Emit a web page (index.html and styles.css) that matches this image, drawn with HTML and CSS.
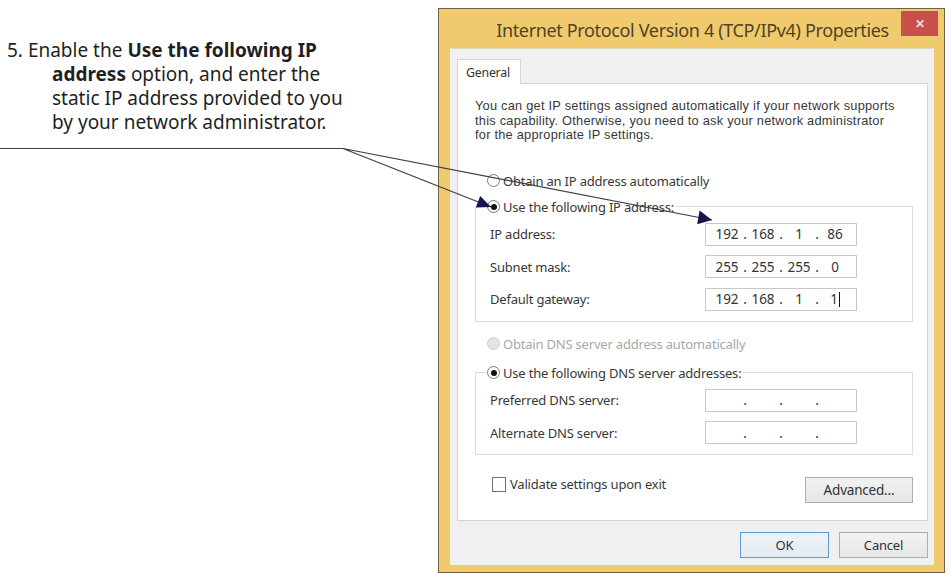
FILE: index.html
```html
<!DOCTYPE html>
<html lang="en">
<head>
<meta charset="utf-8">
<title>Internet Protocol Version 4 (TCP/IPv4) Properties</title>
<link rel="stylesheet" href="styles.css">
</head>
<body>
<div class="page">
  <div class="step">
    <p class="step-text">5. Enable the <b>Use the following IP</b><br><b>address</b> option, and enter the<br>static IP address provided to you<br>by your network administrator.</p>
  </div>

  <div class="window">
    <div class="titlebar">
      <span class="title">Internet Protocol Version 4 (TCP/IPv4) Properties</span>
      <span class="close">&#x2715;</span>
    </div>
    <div class="client">
      <div class="tabs"><span class="tab">General</span></div>
      <div class="panel">
        <p class="desc">You can get IP settings assigned automatically if your network supports<br>this capability. Otherwise, you need to ask your network administrator<br>for the appropriate IP settings.</p>

        <div class="radio-row first"><span class="radio"></span><span>Obtain an IP address automatically</span></div>
        <fieldset class="group ip-group">
          <legend class="radio-row"><span class="radio checked"></span><span>Use the following IP address:</span></legend>
          <div class="field-row"><span class="label">IP address:</span>
            <span class="ipbox"><span class="seg">192</span><span class="dot">.</span><span class="seg">168</span><span class="dot">.</span><span class="seg">1</span><span class="dot">.</span><span class="seg">86</span></span></div>
          <div class="field-row"><span class="label">Subnet mask:</span>
            <span class="ipbox"><span class="seg">255</span><span class="dot">.</span><span class="seg">255</span><span class="dot">.</span><span class="seg">255</span><span class="dot">.</span><span class="seg">0</span></span></div>
          <div class="field-row"><span class="label">Default gateway:</span>
            <span class="ipbox"><span class="seg">192</span><span class="dot">.</span><span class="seg">168</span><span class="dot">.</span><span class="seg">1</span><span class="dot">.</span><span class="seg">1<span class="caret"></span></span></span></div>
        </fieldset>

        <div class="radio-row dns disabled"><span class="radio"></span><span>Obtain DNS server address automatically</span></div>
        <fieldset class="group dns-group">
          <legend class="radio-row"><span class="radio checked"></span><span>Use the following DNS server addresses:</span></legend>
          <div class="field-row"><span class="label">Preferred DNS server:</span>
            <span class="ipbox"><span class="seg"></span><span class="dot">.</span><span class="seg"></span><span class="dot">.</span><span class="seg"></span><span class="dot">.</span><span class="seg"></span></span></div>
          <div class="field-row"><span class="label">Alternate DNS server:</span>
            <span class="ipbox"><span class="seg"></span><span class="dot">.</span><span class="seg"></span><span class="dot">.</span><span class="seg"></span><span class="dot">.</span><span class="seg"></span></span></div>
        </fieldset>

        <div class="bottom-row">
          <span class="check-row"><span class="checkbox"></span><span>Validate settings upon exit</span></span>
          <span class="btn advanced">Advanced...</span>
        </div>
      </div>
      <div class="footer">
        <span class="btn ok">OK</span>
        <span class="btn">Cancel</span>
      </div>
    </div>
  </div>
</div>

<svg class="callout" width="951" height="576" viewBox="0 0 951 576">
  <path d="M0 148.5 H343 L712 220 M343 148.5 L491 207" fill="none" stroke="#3d3d48" stroke-width="1.2"/>
  <polygon points="491,207 475.8,207.6 480.2,196" fill="#15154f"/>
  <polygon points="712,220 697.2,224.2 699.6,210.6" fill="#15154f"/>
</svg>
</body>
</html>
```

FILE: styles.css
```css
* { box-sizing: border-box; }

html, body {
  margin: 0;
  padding: 0;
  background: #ffffff;
}

body {
  width: 951px;
  height: 576px;
  overflow: hidden;
  position: relative;
  font-family: "Noto Sans", "Open Sans", sans-serif;
}

.page {
  display: flex;
  padding-top: 8px;
}

/* ---------- instruction text ---------- */
.step {
  width: 438px;
  flex: none;
}

.step-text {
  margin: 30px 0 0 0;
  padding-left: 52px;
  text-indent: -45px;
  font-family: "Noto Sans", sans-serif;
  font-size: 19px;
  line-height: 24px;
  color: #1f1f1f;
}

.step-text b { font-weight: 700; }

/* ---------- window ---------- */
.window {
  width: 507px;
  height: 565px;
  flex: none;
  position: relative;
  border: 1px solid #6f6246;
  background: #f1ca6e;
  display: flex;
  flex-direction: column;
}

.titlebar {
  height: 39px;
  flex: none;
  display: flex;
  align-items: center;
  justify-content: center;
  padding-top: 3px;
}

.title {
  font-family: "Noto Sans", sans-serif;
  font-size: 18px;
  letter-spacing: -0.35px;
  color: #4e4428;
  margin-left: 2px;
}

.close {
  position: absolute;
  top: 2px;
  right: 6px;
  width: 37px;
  height: 25px;
  background: #c94f4a;
  color: #f4dede;
  font-size: 12px;
  font-weight: 700;
  display: flex;
  align-items: center;
  justify-content: center;
}

.client {
  flex: 1;
  margin: 0 10px 7px 11px;
  background: #f0f0f0;
  padding: 10px 6px 0 7px;
  display: flex;
  flex-direction: column;
  border-top: 1px solid #e6d9b8;
}

.tabs {
  display: flex;
  height: 25px;
  margin-bottom: -1px;
  position: relative;
  z-index: 1;
}

.tab {
  width: 64px;
  height: 25px;
  background: #ffffff;
  border: 1px solid #d4d4d4;
  border-bottom: none;
  font-size: 12.3px;
  letter-spacing: -0.2px;
  color: #333;
  padding: 4px 0 0 8px;
}

.panel {
  height: 438px;
  background: #ffffff;
  border: 1px solid #d4d4d4;
  padding: 15px 13px 0 17px;
  font-size: 13px;
  color: #383838;
}

.desc {
  margin: 0;
  font-family: "Liberation Sans", Arial, sans-serif;
  font-size: 12.8px;
  line-height: 14.5px;
  letter-spacing: 0.24px;
  color: #383838;
}

/* ---------- radios ---------- */
.radio-row {
  display: flex;
  align-items: center;
  height: 16px;
  gap: 3px;
  font-size: 13px;
  letter-spacing: -0.2px;
  color: #383838;
}

.radio-row.first {
  margin: 30px 0 0 12px;
}

.radio-row.dns {
  margin: 14px 0 0 12px;
}

.radio-row.disabled { color: #a8a8a8; }

.radio {
  width: 13px;
  height: 13px;
  border-radius: 50%;
  border: 1px solid #7c7c7c;
  background: #fff;
  flex: none;
  display: flex;
  align-items: center;
  justify-content: center;
}

.radio.checked::after {
  content: "";
  width: 6px;
  height: 6px;
  border-radius: 50%;
  background: #111;
}

.disabled .radio {
  border-color: #d0d0d0;
  background: #e4e4e4;
}

/* ---------- group boxes ---------- */
.group {
  width: 438px;
  border: 1px solid #dcdcdc;
  padding: 0 14px 10px 14px;
  margin: 0;
}

.ip-group { margin-top: 10px; }
.dns-group { margin-top: 13px; }

.group legend.radio-row {
  padding: 0 2px 0 0;
  margin-left: -3px;
}

.field-row {
  display: flex;
  align-items: center;
  height: 23px;
  margin-top: 9.5px;
}

.group .field-row:first-of-type { margin-top: 8px; }

.label {
  width: 215px;
  flex: none;
  letter-spacing: -0.2px;
}

.ipbox {
  width: 152px;
  height: 23px;
  border: 1px solid #c8c8c8;
  background: #fff;
  display: flex;
  align-items: center;
  padding-left: 6px;
  font-size: 13.5px;
  color: #333;
}

.seg {
  width: 30px;
  text-align: center;
  position: relative;
}

.dot {
  width: 6px;
  text-align: center;
}

.caret {
  display: inline-block;
  width: 1px;
  height: 15px;
  background: #111;
  vertical-align: middle;
  margin-left: 1px;
  position: relative;
  top: -1px;
}

/* ---------- bottom row ---------- */
.bottom-row {
  width: 438px;
  margin-top: 22px;
  display: flex;
  justify-content: space-between;
  align-items: flex-start;
}

.check-row {
  display: flex;
  align-items: center;
  gap: 4px;
  margin: -2px 0 0 17px;
  font-size: 13px;
  letter-spacing: -0.2px;
}

.checkbox {
  width: 14px;
  height: 15px;
  border: 1px solid #707070;
  background: #fff;
}

.btn {
  height: 26px;
  width: 89px;
  display: flex;
  align-items: center;
  justify-content: center;
  border: 1px solid #adadad;
  background: linear-gradient(#f2f2f2, #e6e6e6);
  font-size: 13px;
  letter-spacing: -0.2px;
  color: #333;
}

.btn.advanced {
  width: 108px;
  font-size: 13.5px;
}

.footer {
  display: flex;
  justify-content: flex-end;
  gap: 10px;
  margin-top: 11px;
}

.btn.ok {
  border-color: #5c9bd1;
  background: linear-gradient(#eef3f8, #e3ebf3);
}

/* ---------- callout overlay ---------- */
.callout {
  position: absolute;
  left: 0;
  top: 0;
  pointer-events: none;
}
```
